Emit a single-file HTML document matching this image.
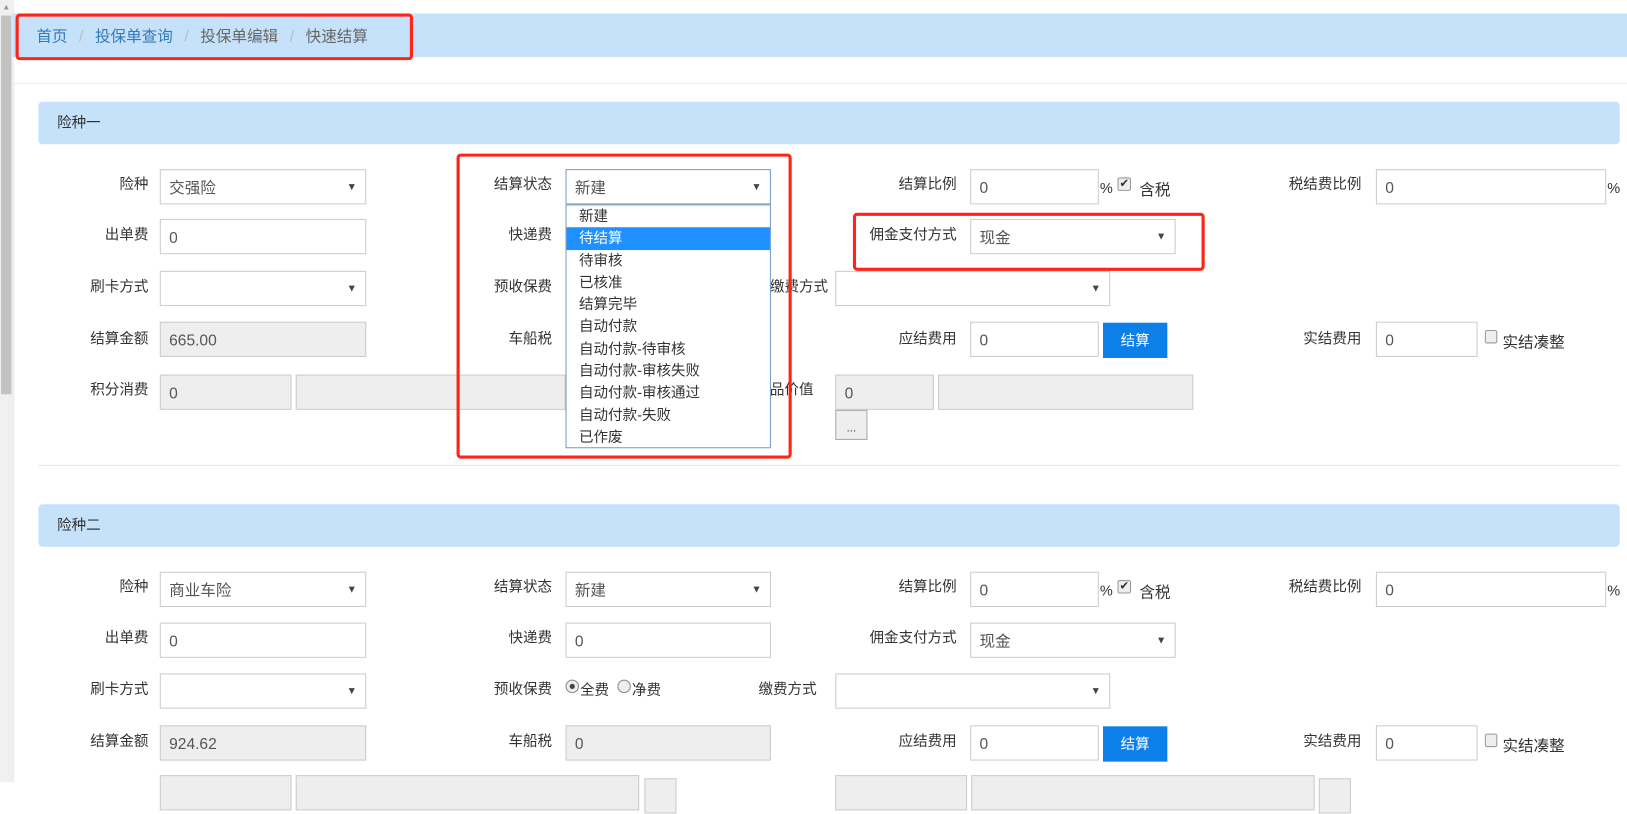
<!DOCTYPE html>
<html><head><meta charset="utf-8"><style>
*{box-sizing:border-box;margin:0;padding:0}
body{width:1627px;height:782px;overflow:hidden;background:#fff;font-family:"Liberation Sans","Noto Sans CJK SC",sans-serif;font-size:14px;color:#333;position:relative}
#w{position:absolute;left:0;top:0;width:1568px;height:754px;transform:scale(1.03763);transform-origin:0 0}
.a{position:absolute}
.lb{position:absolute;text-align:right;width:120px;font-size:14px;color:#333}
.in{position:absolute;height:34px;border:1px solid #ccc;background:#fff;padding:0 8px;line-height:36px;font-size:15px;color:#555}
.dis{background:#eee}
.sel::after{content:"▼";position:absolute;right:8px;top:0;font-size:10px;color:#444;line-height:34px}
.hd{position:absolute;left:37px;width:1524px;height:41px;background:#c6e2fb;border-radius:4px;padding-left:18px;line-height:41px;font-size:14px;color:#333}
.red{position:absolute;border:3px solid #ff2318;border-radius:4px}
.btn{position:absolute;background:#0c7fe8;color:#fff;text-align:center;line-height:34px;font-size:14px;height:34px;width:62px}
.cb{position:absolute;width:12px;height:13px;border:1px solid #999;border-radius:2px;background:#eee}
.dd{position:absolute;left:545px;top:197px;width:198px;height:235px;border:1px solid #7a9cc8;background:#fff;font-size:14px}
.dd div{height:21.3px;line-height:21px;padding-left:12px;color:#333}
</style></head><body><div id="w">
<div class="a" style="left:0;top:0;width:14px;height:754px;background:#f0f0f0"></div>
<div class="a" style="left:1px;top:15px;width:10px;height:365px;background:#c2c2c2"></div>
<div class="a" style="left:2px;top:2px;font-size:8px;color:#999">▲</div>
<div class="a" style="left:12px;top:13px;width:1556px;height:42px;background:#c6e2fb"></div>
<div class="a" style="left:35px;top:24px;font-size:15px;color:#337ab7">首页 <span style="color:#bbb;padding:0 7px">/</span> 投保单查询 <span style="color:#bbb;padding:0 7px">/</span> <span style="color:#666">投保单编辑</span> <span style="color:#bbb;padding:0 7px">/</span> <span style="color:#666">快速结算</span></div>
<div class="red" style="left:15px;top:13px;width:383px;height:45px"></div>
<div class="a" style="left:12px;top:80px;width:1556px;height:674px;border-top:1px solid #e4eef8;border-left:1px solid #e4eef8"></div>
<div class="hd" style="top:98px">险种一</div>
<div class="a" style="left:37px;top:448px;width:1524px;border-top:1px solid #e5e5e5"></div>
<div class="hd" style="top:486px">险种二</div>

<div class="lb" style="left:23px;top:167px">险种</div><div class="in sel" style="left:154px;top:163px;width:199px">交强险</div>
<div class="lb" style="left:412px;top:167px">结算状态</div><div class="in sel" style="left:545px;top:163px;width:198px;border-color:#7a9cc8">新建</div>
<div class="lb" style="left:802px;top:167px">结算比例</div><div class="in" style="left:935px;top:163px;width:124px">0</div>
<div class="a" style="left:1060px;top:173px;font-size:14px">%</div><div class="a" style="left:1077px;top:171px;width:13px;height:13px;border:1px solid #999;border-radius:2px;background:#eee;font-size:11px;line-height:11px;text-align:center">✔</div><div class="a" style="left:1098px;top:172px;font-size:15px">含税</div>
<div class="lb" style="left:1192px;top:167px">税结费比例</div><div class="in" style="left:1326px;top:163px;width:222px">0</div><div class="a" style="left:1549px;top:173px">%</div>

<div class="lb" style="left:23px;top:216px">出单费</div><div class="in" style="left:154px;top:211px;width:199px">0</div>
<div class="lb" style="left:412px;top:216px">快递费</div>
<div class="lb" style="left:802px;top:216px;width:120px">佣金支付方式</div><div class="in sel" style="left:935px;top:211px;width:198px">现金</div>

<div class="lb" style="left:23px;top:266px">刷卡方式</div><div class="in sel" style="left:154px;top:261px;width:199px"></div>
<div class="lb" style="left:412px;top:266px">预收保费</div>
<div class="a" style="left:742px;top:266px">缴费方式</div><div class="in sel" style="left:805px;top:261px;width:265px"></div>

<div class="lb" style="left:23px;top:316px">结算金额</div><div class="in dis" style="left:154px;top:310px;width:199px">665.00</div>
<div class="lb" style="left:412px;top:316px">车船税</div>
<div class="lb" style="left:802px;top:316px">应结费用</div><div class="in" style="left:935px;top:310px;width:124px">0</div><div class="btn" style="left:1063px;top:311px">结算</div>
<div class="lb" style="left:1192px;top:316px">实结费用</div><div class="in" style="left:1326px;top:310px;width:98px">0</div><div class="cb" style="left:1431px;top:318px"></div><div class="a" style="left:1448px;top:319px;font-size:15px">实结凑整</div>

<div class="lb" style="left:23px;top:365px">积分消费</div><div class="in dis" style="left:154px;top:361px;width:127px">0</div><div class="in dis" style="left:285px;top:361px;width:260px"></div>
<div class="a" style="left:742px;top:365px">品价值</div><div class="in dis" style="left:805px;top:361px;width:95px">0</div><div class="in dis" style="left:904px;top:361px;width:246px"></div>
<div class="a" style="left:805px;top:395px;width:31px;height:29px;border:1px solid #aaa;background:#eee;text-align:center;font-size:11px;line-height:34px">...</div>

<div class="dd">
<div>新建</div><div style="background:#1e90ff;color:#fff">待结算</div><div>待审核</div><div>已核准</div><div>结算完毕</div><div>自动付款</div><div>自动付款-待审核</div><div>自动付款-审核失败</div><div>自动付款-审核通过</div><div>自动付款-失败</div><div>已作废</div>
</div>
<div class="red" style="left:440px;top:148px;width:323px;height:294px"></div>
<div class="red" style="left:822px;top:205px;width:339px;height:56px"></div>

<div class="lb" style="left:23px;top:555px">险种</div><div class="in sel" style="left:154px;top:551px;width:199px">商业车险</div>
<div class="lb" style="left:412px;top:555px">结算状态</div><div class="in sel" style="left:545px;top:551px;width:198px">新建</div>
<div class="lb" style="left:802px;top:555px">结算比例</div><div class="in" style="left:935px;top:551px;width:124px">0</div>
<div class="a" style="left:1060px;top:561px">%</div><div class="a" style="left:1077px;top:559px;width:13px;height:13px;border:1px solid #999;border-radius:2px;background:#eee;font-size:11px;line-height:11px;text-align:center">✔</div><div class="a" style="left:1098px;top:560px;font-size:15px">含税</div>
<div class="lb" style="left:1192px;top:555px">税结费比例</div><div class="in" style="left:1326px;top:551px;width:222px">0</div><div class="a" style="left:1549px;top:561px">%</div>

<div class="lb" style="left:23px;top:604px">出单费</div><div class="in" style="left:154px;top:600px;width:199px">0</div>
<div class="lb" style="left:412px;top:604px">快递费</div><div class="in" style="left:545px;top:600px;width:198px">0</div>
<div class="lb" style="left:802px;top:604px">佣金支付方式</div><div class="in sel" style="left:935px;top:600px;width:198px">现金</div>

<div class="lb" style="left:23px;top:654px">刷卡方式</div><div class="in sel" style="left:154px;top:649px;width:199px"></div>
<div class="lb" style="left:412px;top:654px">预收保费</div>
<div class="a" style="left:545px;top:655px;width:13px;height:13px;border-radius:50%;border:1px solid #888;background:#eee"><div style="width:5px;height:5px;border-radius:50%;background:#444;margin:3px"></div></div><div class="a" style="left:559px;top:655px">全费</div>
<div class="a" style="left:595px;top:655px;width:13px;height:13px;border-radius:50%;border:1px solid #888;background:#eee"></div><div class="a" style="left:609px;top:655px">净费</div>
<div class="a" style="left:731px;top:654px">缴费方式</div><div class="in sel" style="left:805px;top:649px;width:265px"></div>

<div class="lb" style="left:23px;top:704px">结算金额</div><div class="in dis" style="left:154px;top:699px;width:199px">924.62</div>
<div class="lb" style="left:412px;top:704px">车船税</div><div class="in dis" style="left:545px;top:699px;width:198px">0</div>
<div class="lb" style="left:802px;top:704px">应结费用</div><div class="in" style="left:935px;top:699px;width:124px">0</div><div class="btn" style="left:1063px;top:700px">结算</div>
<div class="lb" style="left:1192px;top:704px">实结费用</div><div class="in" style="left:1326px;top:699px;width:98px">0</div><div class="cb" style="left:1431px;top:707px"></div><div class="a" style="left:1448px;top:708px;font-size:15px">实结凑整</div>

<div class="in dis" style="left:154px;top:747px;width:127px"></div><div class="in dis" style="left:285px;top:747px;width:331px"></div><div class="in" style="left:621px;top:750px;width:31px;background:#eee"></div>
<div class="in dis" style="left:805px;top:747px;width:127px"></div><div class="in dis" style="left:936px;top:747px;width:331px"></div><div class="in" style="left:1271px;top:750px;width:31px;background:#eee"></div>
</div></body></html>
